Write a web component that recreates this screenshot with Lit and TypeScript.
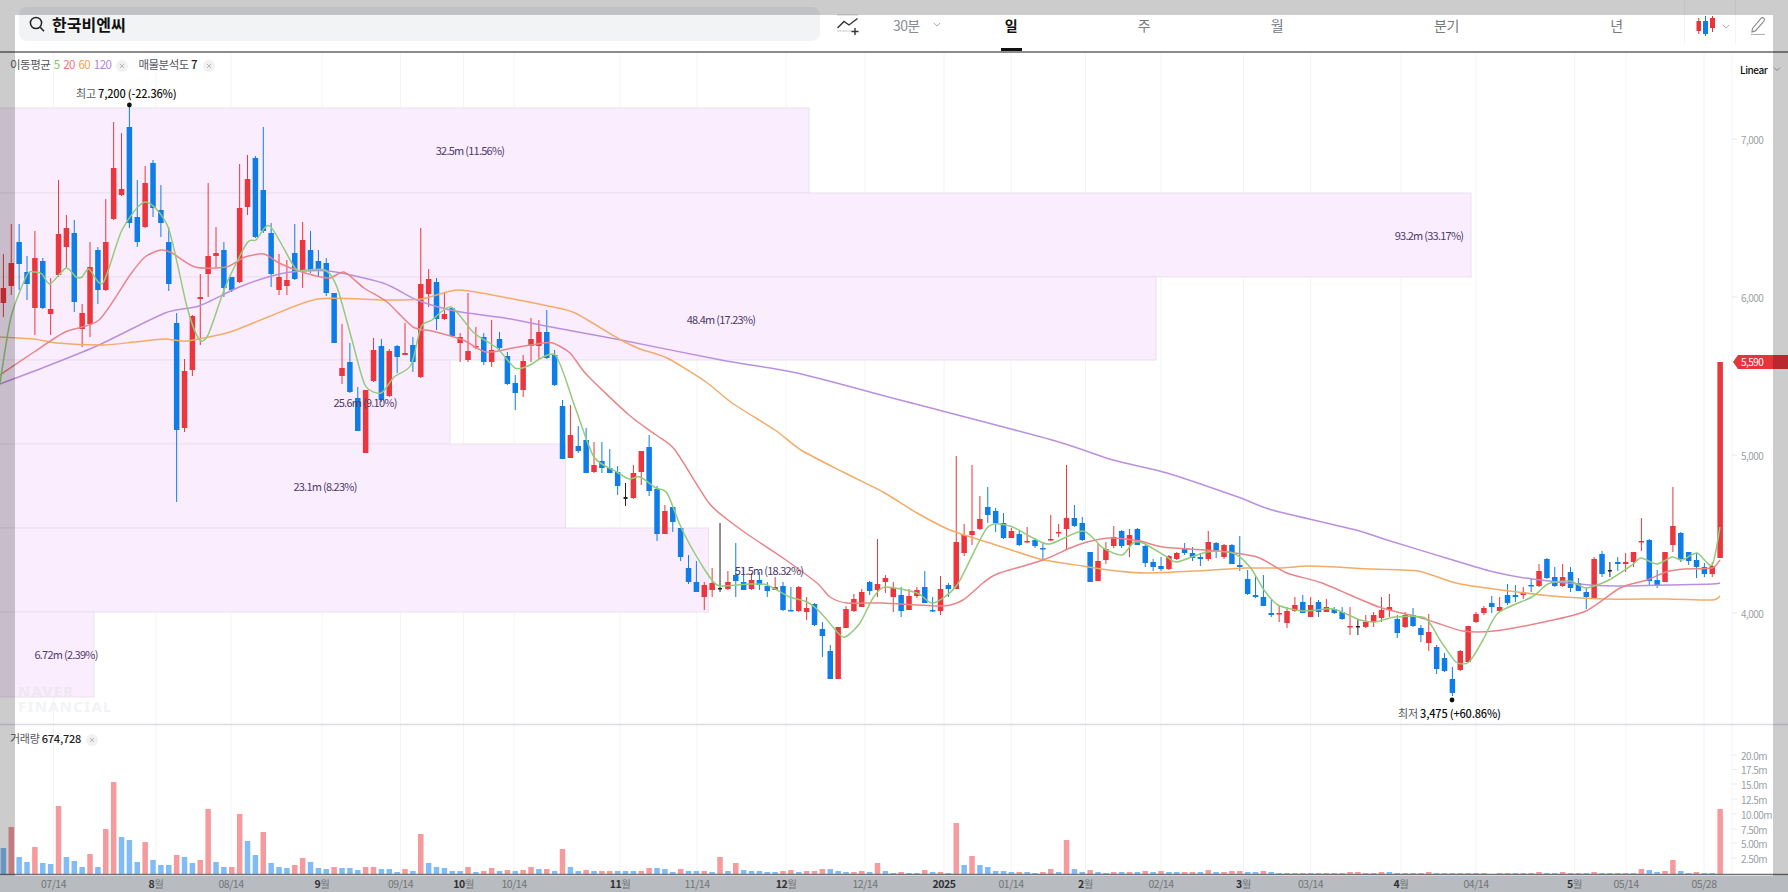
import { LitElement, html, svg, css } from "lit";
import { customElement } from "lit/decorators.js";

type C = [number, number, number, number, number];
const R = 0, B = 1, K = 2;
const candles: C[] = [
[254,288,303,317,R],[224,263,286,295,R],[224,242,264,290,B],[256,272,284,300,B],[231,258,308,335,R],[258,261,308,309,B],[278,309,314,335,R],[180,234,275,277,R],[215,228,247,268,R],[220,233,302,312,B],
[304,313,329,347,R],[242,267,324,337,R],[247,250,290,304,B],[199,242,290,291,R],[122,168,219,220,R],[133,189,195,196,R],[107,127,223,228,B],[180,217,242,247,B],[166,183,227,228,R],[160,163,208,217,B],
[185,210,223,237,B],[227,242,284,291,B],[313,323,430,502,B],[359,371,428,432,R],[315,316,370,376,R],[274,297,299,345,R],[183,256,274,297,R],[227,253,256,267,R],[242,250,288,297,B],[277,277,290,292,B],
[164,208,282,283,R],[155,179,207,215,R],[156,158,237,238,B],[127,190,231,233,B],[223,233,274,287,B],[254,277,290,295,R],[260,280,286,295,R],[224,253,279,280,B],[222,240,270,288,R],[231,250,271,273,B],
[250,261,270,277,B],[258,263,293,296,B],[293,293,343,343,B],[324,368,376,384,R],[343,362,392,393,B],[387,398,431,431,B],[390,390,453,453,R],[338,350,381,382,R],[339,346,400,402,B],[349,351,396,397,R],
[345,346,357,373,B],[323,353,355,355,R],[337,345,362,372,B],[228,284,377,378,R],[269,279,294,307,R],[278,282,319,330,B],[292,314,319,320,R],[307,308,336,337,B],[333,337,343,362,R],[293,351,360,362,R],
[327,346,347,349,R],[333,337,362,365,B],[320,350,362,367,R],[332,339,348,350,B],[352,356,384,385,B],[375,383,393,410,B],[355,361,390,397,R],[318,339,346,362,R],[320,332,346,359,R],[310,332,358,359,B],
[350,355,385,386,B],[400,406,459,459,B],[405,435,458,458,R],[426,446,451,453,B],[428,440,473,473,B],[442,465,472,473,R],[442,461,468,473,B],[449,468,473,473,B],[466,472,486,495,B],[483,497,499,506,K],
[465,473,498,499,R],[451,451,472,485,R],[435,447,491,496,B],[486,489,534,541,B],[505,511,534,534,R],[507,507,522,532,B],[528,528,557,561,B],[555,568,582,584,B],[561,582,592,592,B],[582,585,597,610,R],
[568,583,590,597,R],[523,588,589.5,592,K],[571,582,589,590,R],[543,575,581,597,B],[567,582,590,590,B],[573,580,589,590,R],[572,580,585,590,B],[582,586,591,597,B],[577,587,590,590,R],[582,586,610,611,B],
[587,610,611,611,B],[586,587,611,612,R],[597,608,612,620,R],[603,604,625,626,B],[622,629,636,657,B],[645,651,679,679,B],[627,627,679,679,R],[606,609,628,628,R],[594,599,611,612,R],[589,592,607,607,R],
[581,582,591,595,B],[539,584,590,597,R],[575,578,582,593,R],[582,588,597,612,R],[587,595,611,617,B],[589,596,610,610,R],[587,590,596,598,R],[571,587,603,603,B],[597,610,611,612,B],[576,589,611,615,R],
[583,585,589,597,B],[456,542,589,589,R],[524,535,553,556,R],[465,531,535,545,R],[496,519,529,530,R],[487,507,515,523,B],[508,511,523,532,B],[513,523,538,539,B],[528,531,538,538,R],[530,534,545,546,B],
[527,541,542,543,R],[538,540,546,548,B],[543,548,549,559,B],[515,539,540,541,R],[524,532,533,537,R],[465,518,529,550,R],[505,518,526,527,B],[517,523,540,541,B],[552,552,582,582,B],[544,561,581,581,R],
[542,549,560,564,R],[526,537,546,548,R],[530,531,546,548,B],[529,535,545,557,R],[528,529,545,545,B],[545,546,563,567,B],[559,562,567,571,B],[557,566,569,571,B],[555,556,569,570,R],[552,553,559,560,R],
[543,549,553,555,B],[547,553,558,561,B],[553,557,559,566,B],[531,542,559,561,R],[542,543,552,558,B],[544,545,557,559,R],[544,545,564,564,B],[536,565,567,571,B],[570,579,594,595,B],[576,595,597,598,B],
[575,597,606,606,B],[600,613,615,617,B],[605,613,614,622,R],[607,611,623,628,R],[597,605,611,612,R],[595,602,613,613,B],[597,605,617,617,R],[600,602,612,617,B],[599,607,612,612,R],[607,609,613,614,B],
[607,612,619,620,B],[607,626,627,635,R],[619,626,627,635,K],[615,622,627,628,R],[612,615,622,627,R],[597,610,618,622,R],[594,607,610,617,R],[615,619,633,638,B],[612,615,627,628,R],[608,615,626,627,B],
[625,628,635,642,B],[614,632,643,651,R],[645,647,669,674,B],[653,658,671,672,B],[667,679,693,696,B],[650,651,670,671,R],[626,626,662,662,R],[612,614,622,623,R],[606,608,613,615,R],[596,603,607,613,B],
[597,607,611,612,R],[584,595,603,605,B],[585,595,597,602,B],[587,592,595,599,R],[578,585,586,592,B],[564,571,586,587,R],[558,559,578,579,B],[567,577,586,587,B],[564,577,586,587,R],[567,572,588,592,B],
[578,583,591,591,B],[588,592,597,609,B],[557,559,598,598,R],[551,554,574,577,B],[562,570,571,577,K],[557,562,564,571,B],[553,562,564,572,R],[552,552,562,567,R],[518,541,542,551,R],[539,540,581,586,B],
[570,580,585,588,B],[552,552,582,582,R],[487,526,545,552,R],[532,533,559,562,B],[552,552,561,565,B],[553,560,567,578,B],[563,567,574,577,B],[562,566,574,577,R],[362,362,558,558,R],
];
// positive: red bar, negative: blue bar, height in px
const volumes = [
-26,47,-17,-12,27,-11,-10,68,-17,-13,-7,20,-7,45,92,-37,-34,-12,32,-14,-9,-9,19,-17,-11,14,65,-12,-7,7,60,-33,-19,42,-11,-7,-6,9,16,-12,-6,-5,7,-6,-6,-4,7,7,-5,-5,-2,5,-3,40,-11,-7,-6,-3,-3,7,-2,3,6,-3,4,-3,4,7,-5,5,-3,25,-7,-3,4,
-3,3,3,-3,-3,-3,3,6,-6,-5,-2,5,-3,-3,3,-2,17,-3,11,-4,-3,-3,-2,-2,3,4,-2,3,3,5,-5,-3,-2,2,3,-2,11,-3,-1,2,-1,-1,4,-2,2,-1,51,-9,18,-9,-7,-3,-3,-2,2,-2,-1,2,5,-2,34,-5,-2,4,-2,-1,2,-2,2,-2,3,-2,3,-2,-2,
2,2,-2,4,-2,2,3,3,-2,-2,3,-2,-1,1,1,1,-1,1,1,1,1,2,2,-1,-1,2,-2,-1,1,1,1,2,-1,-1,-1,-1,-1,-1,1,0,1,1,-1,-1,1,2,-1,-1,2,-1,-1,-1,2,-1,-1,1,1,-1,5,-4,-2,3,14,-3,-1,2,-1,-1,65,
];
const maGreen: number[][] = [[0,383],[11,317],[27,275],[34,272],[42,274],[50,284],[66,268],[76,277],[82,277],[89,269],[103,283],[122,230],[145,202],[168,227],[187,307],[199,339],[208,335],[226,285],[247,243],[256,240],[270,226],[295,268],[306,270],[325,270],[337,287],[352,340],[365,385],[381,393],[394,377],[411,365],[421,327],[432,320],[451,307],[474,333],[497,348],[515,368],[528,366],[555,355],[575,407],[594,457],[617,472],[629,479],[640,477],[656,488],[667,493],[680,525],[690,545],[703,567],[712,580],[720,586],[750,584],[767,585],[790,597],[807,602],[820,612],[840,635],[847,636],[860,623],[873,598],[885,587],[917,593],[933,603],[957,585],[987,528],[1010,526],[1033,538],[1050,544],[1083,531],[1103,548],[1122,555],[1133,543],[1143,543],[1167,557],[1177,562],[1207,552],[1233,553],[1250,567],[1264,590],[1278,605],[1303,611],[1333,609],[1360,620],[1375,622],[1395,617],[1425,618],[1440,640],[1456,662],[1469,662],[1483,640],[1498,613],[1532,597],[1548,584],[1570,581],[1586,588],[1609,580],[1632,565],[1641,558],[1657,564],[1672,557],[1682,560],[1697,553],[1712,565],[1720,527]];
const maRed: number[][] = [[0,375],[34,352],[65,332],[99,320],[130,275],[145,257],[161,250],[172,253],[195,267],[226,267],[245,257],[264,254],[279,263],[302,272],[329,278],[344,272],[364,288],[387,302],[413,327],[432,331],[463,340],[486,352],[513,348],[543,343],[553,343],[570,353],[587,375],[629,415],[656,435],[675,450],[709,503],[732,523],[750,536],[783,558],[817,583],[830,597],[847,603],[883,603],[943,606],[963,600],[983,583],[997,574],[1043,560],[1070,548],[1087,542],[1110,538],[1140,541],[1163,547],[1217,551],[1257,557],[1287,573],[1322,583],[1379,607],[1418,617],[1437,623],[1463,631],[1494,631],[1544,622],[1586,611],[1620,588],[1647,580],[1666,572],[1685,569],[1712,568],[1720,560]];
const maOrange: number[][] = [[0,337],[34,339],[57,343],[103,345],[134,342],[165,339],[187,341],[230,332],[268,317],[318,299],[383,300],[421,299],[459,290],[513,299],[553,307],[575,313],[621,340],[640,349],[667,358],[706,382],[732,403],[775,430],[801,450],[843,472],[883,492],[917,513],[950,530],[990,543],[1040,559],[1083,566],[1117,571],[1147,573],[1197,571],[1245,568],[1280,568],[1310,566],[1372,569],[1418,571],[1456,583],[1494,589],[1552,596],[1605,599],[1666,599],[1712,600],[1720,596]];
const maPurple: number[][] = [[0,384],[50,365],[99,345],[165,313],[199,306],[237,288],[268,277],[291,272],[329,271],[383,283],[417,300],[455,311],[505,318],[551,327],[621,340],[721,360],[797,373],[900,400],[1052,440],[1113,460],[1167,473],[1238,497],[1272,510],[1356,530],[1387,540],[1456,561],[1494,572],[1532,579],[1590,585],[1628,586],[1666,585],[1712,584],[1720,583]];

const boxes = [
  { y: 108, w: 809, h: 85, label: "32.5m (11.56%)", cx: 470 },
  { y: 193, w: 1471, h: 84, label: "93.2m (33.17%)", cx: 1429 },
  { y: 277, w: 1156, h: 83, label: "48.4m (17.23%)", cx: 721 },
  { y: 360, w: 450, h: 84, label: "25.6m (9.10%)", cx: 365 },
  { y: 444, w: 565.5, h: 84, label: "23.1m (8.23%)", cx: 325 },
  { y: 528, w: 708.5, h: 84, label: "51.5m (18.32%)", cx: 769 },
  { y: 612, w: 94, h: 85, label: "6.72m (2.39%)", cx: 66 },
];
const months: [number, string, string][] = [[156,"8","월"],[322,"9","월"],[463.5,"10","월"],[620,"11","월"],[786,"12","월"],[944,"2025",""],[1085.5,"2","월"],[1243.5,"3","월"],[1401,"4","월"],[1574.5,"5","월"]];
const dates: [number, string][] = [[53.5,"07/14"],[231,"08/14"],[400.5,"09/14"],[514,"10/14"],[697,"11/14"],[865,"12/14"],[1011,"01/14"],[1161,"02/14"],[1310.5,"03/14"],[1476,"04/14"],[1626,"05/14"],[1704,"05/28"]];
const priceTicks: [number, string][] = [[139,"7,000"],[297,"6,000"],[455,"5,000"],[613,"4,000"]];
const volTicks: [number, string][] = [[755,"20.0m"],[769.5,"17.5m"],[784,"15.0m"],[799,"12.5m"],[814,"10.00m"],[829,"7.50m"],[843,"5.00m"],[858,"2.50m"]];

const cx = (i: number) => 3.4 + i * 7.875;

function smooth(p: number[][]): string {
  let d = `M${p[0][0]} ${p[0][1]}`;
  for (let i = 0; i < p.length - 1; i++) {
    const a = p[Math.max(0, i - 1)], b = p[i], c = p[i + 1], e = p[Math.min(p.length - 1, i + 2)];
    const k = 1 / 8;
    d += `C${(b[0] + (c[0] - a[0]) * k).toFixed(1)} ${(b[1] + (c[1] - a[1]) * k).toFixed(1)} ${(c[0] - (e[0] - b[0]) * k).toFixed(1)} ${(c[1] - (e[1] - b[1]) * k).toFixed(1)} ${c[0]} ${c[1]}`;
  }
  return d;
}

@customElement("app-root")
export class AppRoot extends LitElement {
  static styles = css`
    :host { display: block; position: relative; width: 1788px; height: 892px; overflow: hidden; background: #fff;
      font-family: "Noto Sans CJK KR", "Noto Sans", sans-serif; color: #222; }
    .frame { position: absolute; inset: 0; box-sizing: border-box; border-style: solid; border-color: rgba(0,0,0,.2);
      border-width: 15px 15px 16px 15px; pointer-events: none; }
    header { display: flex; box-sizing: border-box; height: 53px; padding-left: 19px; border-bottom: 2px solid #8c8c8c; }
    .search { box-sizing: border-box; width: 801px; height: 34px; margin-top: 7px; border-radius: 8px; background: #f2f3f5;
      display: flex; align-items: center; gap: 6px; padding-left: 9px; font-size: 16px; font-weight: 700; letter-spacing: 0; color: #111; }
    .add { width: 56px; display: flex; align-items: center; justify-content: center; padding-bottom: 2px; }
    .interval { box-sizing: border-box; width: 68.5px; padding-left: 17px; display: flex; align-items: center; gap: 13px;
      font-size: 14px; letter-spacing: -.6px; color: #8a8d91; padding-bottom: 2px; }
    .tabs { display: grid; grid-template-columns: 133px 133px 133px 206px 134px; }
    .tab { position: relative; display: flex; align-items: center; justify-content: center; padding-bottom: 2px;
      font-size: 14px; letter-spacing: -.4px; color: #777a7e; }
    .tab.on { color: #111; font-weight: 700; }
    .tab.on::after { content: ""; position: absolute; left: 56px; bottom: 0; width: 21px; height: 3px; background: #111; }
    .type { box-sizing: border-box; width: 52px; height: 44px; padding: 8px 0 0 11px; display: flex; align-items: center; gap: 6px;
      border-left: 1px solid #f3f4f5; border-right: 1px solid #f3f4f5; }
    .draw { flex: 1; display: flex; align-items: center; padding-left: 14px; padding-bottom: 2px; }
    .chart { position: relative; }
    .chart > svg { display: block; }
    .legend { position: absolute; display: flex; align-items: center; font-size: 11.5px; letter-spacing: -.5px; color: #55585c; white-space: nowrap; }
    .legend.main { left: 10px; top: 3px; }
    .legend.vol { left: 10px; top: 677px; font-size: 11px; letter-spacing: -.25px; }
    .legend b { font-weight: 500; color: #222; }
    .legend span { margin-left: 3.5px; }
    .g { color: #7cc35f; } .r { color: #ee7477; } .o { color: #f3a24f; } .p { color: #b283dc; }
    .x { width: 12px; height: 12px; border-radius: 50%; background: #f1f1f2; display: inline-flex; align-items: center; justify-content: center; }
    .legend .close1 { margin-left: 5px; }
    .legend .close2 { margin-left: 6px; }
    .legend .gap { margin-left: 10px; }
    .box { fill: #faeefe; stroke: #ebdff0; stroke-width: 1; }
    .boxlabel { font-size: 11px; letter-spacing: -.75px; fill: #4f3a6a; text-anchor: middle; dominant-baseline: central; }
    .grid { stroke: #f3f4f6; stroke-width: 1; }
    .wick { stroke-width: 1; }
    .ma { fill: none; stroke-width: 1.5; stroke-linejoin: round; }
    .note { font-size: 11px; letter-spacing: -.2px; fill: #55585c; dominant-baseline: central; }
    .note .strong { font-weight: 500; fill: #111; }
    .tick { font-size: 10px; letter-spacing: -.55px; fill: #9b9fa5; dominant-baseline: central; }
    .linear { font-size: 10px; letter-spacing: -.45px; fill: #111; font-weight: 500; dominant-baseline: central; }
    .pricetag { font-size: 10px; letter-spacing: -.55px; fill: #fff; dominant-baseline: central; }
    .ax { font-size: 10.5px; letter-spacing: -.45px; fill: #8f9296; text-anchor: middle; dominant-baseline: central; }
    .ax .num { font-weight: 700; fill: #3c3e42; }
    .mark { font-size: 15px; font-weight: 700; letter-spacing: 1.3px; font-family: "Noto Sans", sans-serif; dominant-baseline: central; }
    .mark.top { fill: #eee6f1; }
    .mark.bot { fill: #f2f3f5; }
  `;

  private chevron(color = "#a8abb0") {
    return html`<svg width="8" height="5" viewBox="0 0 8 5"><path d="M.7.8 4 4.1 7.3.8" fill="none" stroke=${color} stroke-width="1"/></svg>`;
  }
  private closeBtn() {
    return html`<i class="x"><svg width="6" height="6" viewBox="0 0 6 6"><path d="M1 1l4 4M5 1L1 5" stroke="#b4b6ba" stroke-width="1"/></svg></i>`;
  }

  render() {
    return html`
      <header>
        <div class="search">
          <svg width="18" height="18" viewBox="0 0 18 18"><circle cx="8" cy="8" r="5.6" fill="none" stroke="#222" stroke-width="1.5"/><path d="M12.2 12.2 16 16.2" stroke="#222" stroke-width="1.6"/></svg>
          <span>한국비엔씨</span>
        </div>
        <div class="add">
          <svg width="24" height="22" viewBox="0 0 24 22"><path d="M1 1h21M1 17h15" stroke="#c9cbcf" stroke-width="1.2"/><path d="M1.5 14 8 7.5l5 3.5 8.5-6.5" fill="none" stroke="#333" stroke-width="1.4"/><path d="M19 14v7M15.500 17.500h7" stroke="#333" stroke-width="1.4"/></svg>
        </div>
        <div class="interval"><span>30분</span>${this.chevron()}</div>
        <div class="tabs">
          <div class="tab on">일</div><div class="tab">주</div><div class="tab">월</div><div class="tab">분기</div><div class="tab">년</div>
        </div>
        <div class="type">
          <svg width="20" height="22" viewBox="0 0 20 22"><path d="M2.750 3v16M16.500 1v16" stroke="#e8333a" stroke-width="1"/><path d="M9.500 1v20" stroke="#0e7fe8" stroke-width="1"/><rect x=".5" y="6" width="4.500" height="10" fill="#e8333a"/><rect x="7" y="6" width="5" height="13" fill="#0e7fe8"/><rect x="14" y="3" width="5" height="10" fill="#e8333a"/></svg>
          ${this.chevron()}
        </div>
        <div class="draw">
          <svg width="16" height="20" viewBox="0 0 16 20"><path d="M2.500 13.500 11 3.300c.8-.9 2.200-.9 3 0 .7.800.6 2-.1 2.800L5.400 15.900l-3.400 1z" fill="none" stroke="#86898e" stroke-width="1.100"/><path d="M1 19.500h14" stroke="#b0b2b6" stroke-width="1.200"/></svg>
        </div>
      </header>
      <div class="chart">
        <svg width="1788" height="839" viewBox="0 53 1788 839">
          <rect x="0" y="876" width="1788" height="16" fill="#e7ebf0"/>
          ${[...months.map((m) => m[0]), ...dates.map((d) => d[0]), 1732].map((x) => svg`<line class="grid" x1=${x} x2=${x} y1="53" y2="874"/>`)}
          ${boxes.map((b) => svg`<rect class="box" x="-2" y=${b.y} width=${b.w + 2} height=${b.h}/>`)}
          <text class="mark top" x="18" y="691">NAVER</text>
          <text class="mark bot" x="18" y="706">FINANCIAL</text>
          ${candles.map((c, i) => {
            const col = c[4] === R ? "#ea363c" : c[4] === B ? "#0e7de8" : "#222";
            const x = cx(i);
            const h = Math.max(c[2] - c[1], 1.5);
            return svg`<line class="wick" x1=${x} x2=${x} y1=${c[0]} y2=${c[3]} stroke=${col}/><rect x=${c[4] === K ? x - 2 : x - 2.75} y=${c[1]} width=${c[4] === K ? 4 : 5.5} height=${h} fill=${col}/>`;
          })}
          <path class="ma" d=${smooth(maPurple)} stroke="#bb8fdf"/>
          <path class="ma" d=${smooth(maOrange)} stroke="#f4ab68"/>
          <path class="ma" d=${smooth(maRed)} stroke="#e98588"/>
          <path class="ma" d=${smooth(maGreen)} stroke="#92cb7a"/>
          ${boxes.map((b) => svg`<text class="boxlabel" x=${b.cx} y=${b.y + 41.5}>${b.label}</text>`)}
          <circle cx="129.4" cy="105" r="2.4" fill="#111"/>
          <text class="note" x="76" y="92.500">최고 <tspan class="strong">7,200 (-22.36%)</tspan></text>
          <circle cx="1452" cy="700" r="2.4" fill="#111"/>
          <text class="note" x="1398" y="713">최저 <tspan class="strong">3,475 (+60.86%)</tspan></text>
          <line x1="0" x2="1788" y1="724.500" y2="724.500" stroke="#dcdce6" stroke-width="1.500"/>
          ${volumes.map((v, i) => v === 0 ? null : svg`<rect x=${cx(i) - 2.75} y=${874 - Math.abs(v)} width="5.500" height=${Math.abs(v)} fill=${v > 0 ? "#f59a9d" : "#82bcf6"}/>`)}
          <line x1="0" x2="1788" y1="874.500" y2="874.500" stroke="#6e7074" stroke-width="1.500"/>
          ${priceTicks.map((t) => svg`<line x1="1732" x2="1737" y1=${t[0]} y2=${t[0]} stroke="#e6e7ea"/><text class="tick" x="1741" y=${t[0]}>${t[1]}</text>`)}
          ${volTicks.map((t) => svg`<line x1="1732" x2="1737" y1=${t[0]} y2=${t[0]} stroke="#eceded"/><text class="tick" x="1741" y=${t[0]}>${t[1]}</text>`)}
          <text class="linear" x="1740" y="69">Linear</text>
          <path d="M1774 67.500l3 3 3-3" fill="none" stroke="#a8abb0"/>
          <path d="M1733 362l5-7h50v14h-50z" fill="#e8333a"/>
          <text class="pricetag" x="1741" y="361.500">5,590</text>
          ${dates.map((d) => svg`<text class="ax" x=${d[0]} y="883">${d[1]}</text>`)}
          ${months.map((m) => svg`<text class="ax" x=${m[0]} y="883"><tspan class="num">${m[1]}</tspan>${m[2]}</text>`)}
        </svg>
        <div class="legend main">이동평균<span class="g">5</span><span class="r">20</span><span class="o">60</span><span class="p">120</span><span class="close1">${this.closeBtn()}</span><span class="gap">매물분석도 <b>7</b></span><span class="close2">${this.closeBtn()}</span></div>
        <div class="legend vol">거래량&nbsp;<b>674,728</b><span class="close1">${this.closeBtn()}</span></div>
      </div>
      <div class="frame"></div>
    `;
  }
}
